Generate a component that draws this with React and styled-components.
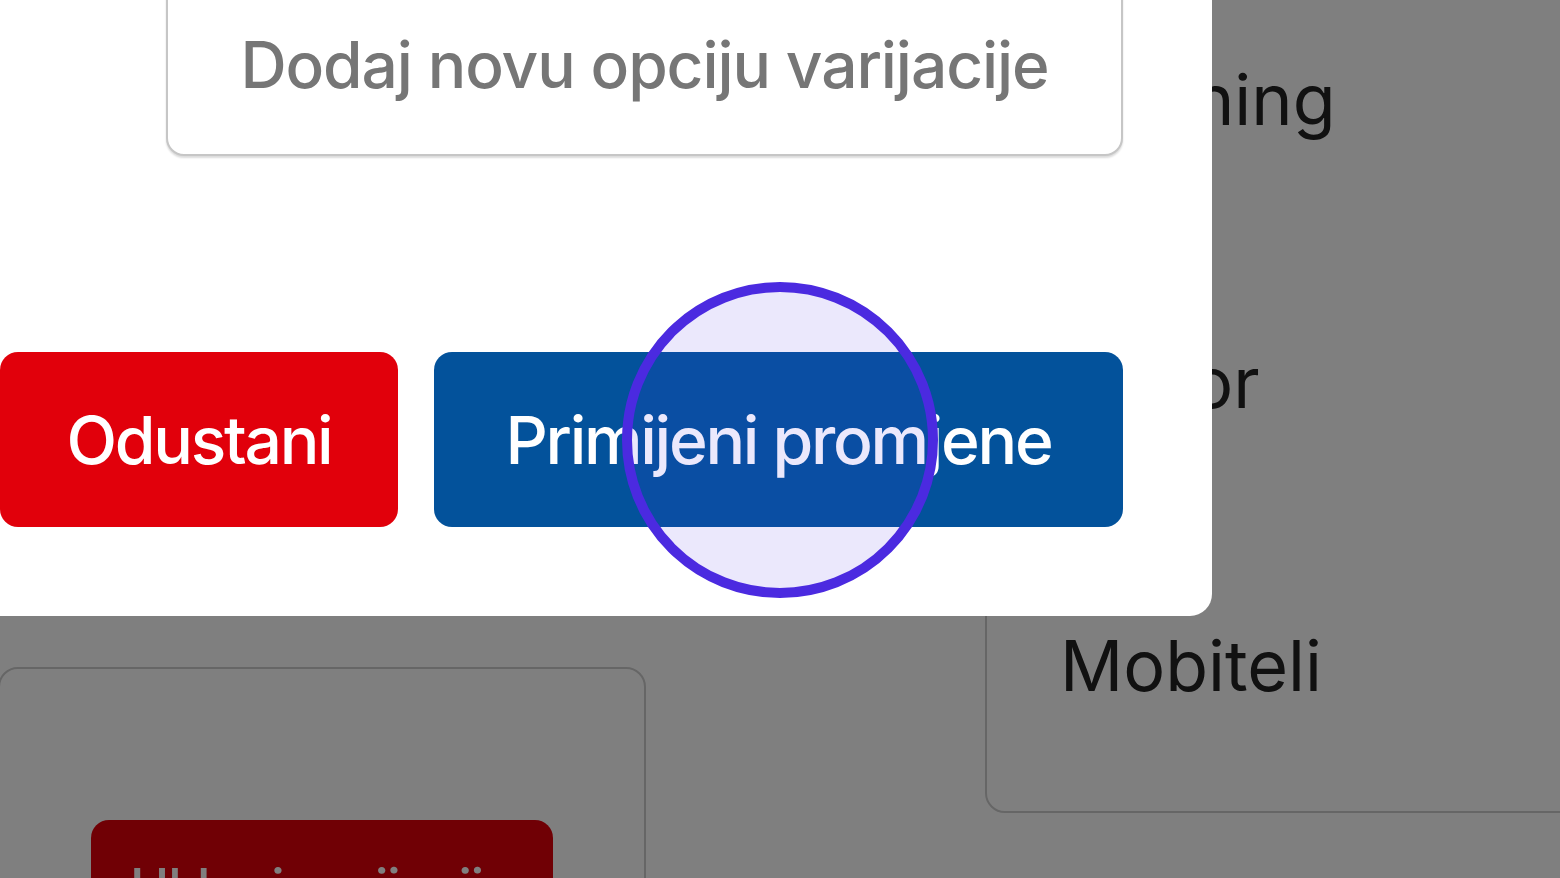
import React from 'react'
import styled, { createGlobalStyle } from 'styled-components'

const GlobalStyle = createGlobalStyle`
  html, body {
    margin: 0;
    padding: 0;
    background: #ffffff;
    overflow: hidden;
  }
  body {
    font-family: "Inter", "Noto Sans", sans-serif;
  }
`

// stranica ispod modala
const Page = styled.div`
  display: grid;
  grid-template-columns: 646px 700px;
  column-gap: 339px;
  align-items: start;
  width: 1560px;
  height: 878px;
  overflow: hidden;
`

const LeftColumn = styled.div`
  padding-top: 667px;
  margin-left: -2px;
`

const VariantCard = styled.div`
  height: 400px;
  border: 2px solid #cccccc;
  border-radius: 20px;
  padding-top: 151px;
  display: flex;
  justify-content: center;
  align-items: flex-start;
`

const RemoveButton = styled.button`
  width: 462px;
  height: 175px;
  border: none;
  border-radius: 18px;
  background: #e1000b;
  color: #ffffff;
  font-family: "Inter", sans-serif;
  font-size: 53px;
  font-weight: 500;
  letter-spacing: -1px;
  white-space: nowrap;
  display: flex;
  align-items: flex-start;
  justify-content: center;
  padding-top: 36px;
`

const CategoryList = styled.div`
  display: flex;
  flex-direction: column;
  gap: 20px;
  margin-top: -60px;
  padding-top: 40px;
  border: 2px solid #cccccc;
  border-radius: 20px;
`

const CategoryItem = styled.div`
  height: 263px;
  box-sizing: border-box;
  padding: 76px 0 0 73px;
  font-size: 70px;
  line-height: 84px;
  color: #222222;
`

// modal
const Overlay = styled.div`
  position: fixed;
  inset: 0;
  background: rgba(0, 0, 0, 0.5);
`

const Modal = styled.div`
  position: absolute;
  left: -89px;
  top: -88px;
  width: 1301px;
  height: 704px;
  box-sizing: border-box;
  background: #ffffff;
  border-radius: 22px;
  padding: 60px 89px 89px 89px;
  display: flex;
  flex-direction: column;
  justify-content: space-between;
`

const OptionInput = styled.input`
  margin-left: 166px;
  height: 184px;
  box-sizing: border-box;
  border: 2px solid #c6c6c6;
  border-radius: 18px;
  box-shadow: 0 2px 2px rgba(0, 0, 0, 0.14);
  background: #ffffff;
  font-family: "Inter", sans-serif;
  font-size: 64px;
  font-weight: 500;
  letter-spacing: -1.1px;
  text-align: center;
  outline: none;

  &::placeholder {
    color: #767676;
  }
`

const ButtonRow = styled.div`
  display: grid;
  grid-template-columns: 398px 1fr;
  column-gap: 36px;
`

const ActionButton = styled.button`
  height: 175px;
  border: none;
  border-radius: 18px;
  background: ${props => (props.variant === 'cancel' ? '#e1000b' : '#03529b')};
  color: #ffffff;
  font-family: "Inter", sans-serif;
  font-size: 66px;
  font-weight: 500;
  letter-spacing: -2.3px;
  cursor: pointer;
`

const ClickMarker = styled.div`
  position: absolute;
  left: 622px;
  top: 282px;
  width: 316px;
  height: 316px;
  box-sizing: border-box;
  border: 10px solid #4b2ae0;
  border-radius: 50%;
  background: rgba(75, 42, 224, 0.11);
  pointer-events: none;
`

const kategorije = ['Clothing', 'Decor', 'Mobiteli']

function App() {
  return (
    <>
      <GlobalStyle />
      <Page>
        <LeftColumn>
          <VariantCard>
            <RemoveButton>Ukloni varijaciju</RemoveButton>
          </VariantCard>
        </LeftColumn>
        <CategoryList>
          {kategorije.map(k => (
            <CategoryItem key={k}>{k}</CategoryItem>
          ))}
        </CategoryList>
      </Page>
      <Overlay>
        <Modal>
          <OptionInput placeholder="Dodaj novu opciju varijacije" />
          <ButtonRow>
            <ActionButton variant="cancel">Odustani</ActionButton>
            <ActionButton variant="apply">Primijeni promjene</ActionButton>
          </ButtonRow>
        </Modal>
        <ClickMarker />
      </Overlay>
    </>
  )
}

export default App
